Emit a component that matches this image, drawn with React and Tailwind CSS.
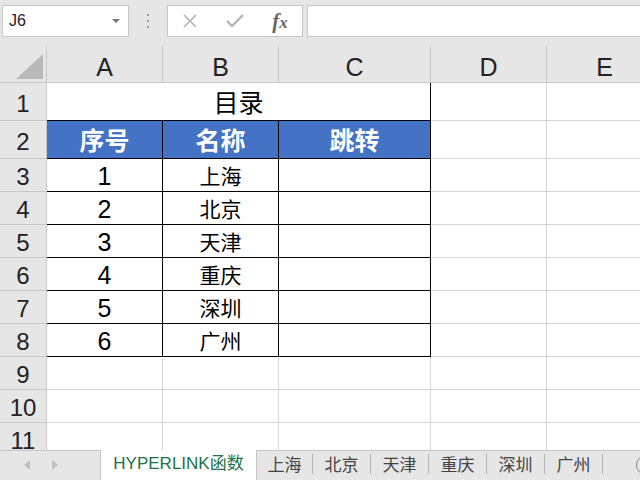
import React from "react";

const CJK = { fontFamily: '"Noto Sans CJK SC", "Noto Sans", sans-serif' };
const LAT = { fontFamily: '"Liberation Sans", "Noto Sans CJK SC", sans-serif' };

const cols = [
  { k: "A", w: "w-[116px]" },
  { k: "B", w: "w-[116px]" },
  { k: "C", w: "w-[152px]" },
  { k: "D", w: "w-[116px]" },
  { k: "E", w: "w-[116px]" },
];

const data = [
  ["1", "上海"],
  ["2", "北京"],
  ["3", "天津"],
  ["4", "重庆"],
  ["5", "深圳"],
  ["6", "广州"],
];

function RowHead({ n, h }) {
  return (
    <div
      className={`w-[47px] shrink-0 ${h} bg-[#e6e6e6] border-r border-b border-[#c8c8c8] flex items-center justify-center text-[24px] text-[#222] pt-[4px]`}
      style={LAT}
    >
      {n}
    </div>
  );
}

export default function App() {
  return (
    <div className="w-[640px] h-[480px] overflow-hidden bg-white flex flex-col relative select-none">
      {/* toolbar */}
      <div className="h-[46px] shrink-0 bg-[#e6e6e6] flex pl-[2px] pt-[5px]">
        <div className="w-[127px] h-[32px] bg-white border border-[#c6c6c6] flex items-center justify-between pl-[6px] pr-[8px]">
          <span className="text-[16px] text-[#222]" style={LAT}>J6</span>
          <svg width="8" height="5" viewBox="0 0 8 5"><path d="M0 0 L8 0 L4 4 Z" fill="#777" /></svg>
        </div>
        <div className="w-[38px] h-[32px] flex items-center justify-center">
          <svg width="4" height="14" viewBox="0 0 4 14">
            <rect x="1" y="0" width="2" height="2" fill="#9a9a9a" />
            <rect x="1" y="6" width="2" height="2" fill="#9a9a9a" />
            <rect x="1" y="12" width="2" height="2" fill="#9a9a9a" />
          </svg>
        </div>
        <div className="w-[136px] h-[32px] bg-white border border-[#c6c6c6] flex items-center">
          <div className="w-[40px] flex justify-center ml-[2px]">
            <svg width="16" height="16" viewBox="0 0 16 16"><path d="M2 2 L14 14 M14 2 L2 14" stroke="#b4b4b4" strokeWidth="1.6" /></svg>
          </div>
          <div className="w-[50px] flex justify-center">
            <svg width="20" height="16" viewBox="0 0 20 16"><path d="M2 8 L7 13 L18 2" stroke="#b4b4b4" strokeWidth="2.4" fill="none" /></svg>
          </div>
          <div className="w-[40px] flex justify-center">
            <span className="italic font-bold text-[21px] text-[#666] leading-none" style={{ fontFamily: '"Liberation Serif", serif' }}>
              f<span className="text-[17px]">x</span>
            </span>
          </div>
        </div>
        <div className="flex-1 ml-[4px] h-[32px] bg-white border border-[#c6c6c6] border-r-0" />
      </div>

      {/* sheet */}
      <div className="flex-1 flex flex-col overflow-hidden">
        {/* column headers */}
        <div className="flex h-[37px] shrink-0 bg-[#e6e6e6] border-b border-[#c8c8c8]">
          <div className="w-[47px] shrink-0 border-r border-[#c8c8c8] flex items-end justify-end pr-[3px] pb-[3px]">
            <svg width="27" height="25" viewBox="0 0 27 25"><path d="M27 0 L27 25 L0 25 Z" fill="#b9b9b9" /></svg>
          </div>
          {cols.map((c) => (
            <div
              key={c.k}
              className={`${c.w} shrink-0 border-r border-[#c8c8c8] flex items-center justify-center text-[25px] text-[#222] pt-[7px]`}
              style={LAT}
            >
              {c.k}
            </div>
          ))}
        </div>

        {/* row 1 */}
        <div className="flex">
          <RowHead n="1" h="h-[38px]" />
          <div className="w-[384px] shrink-0 h-[38px] border-r border-b border-black flex items-center justify-center text-[25px] text-black" style={CJK}>
            目录
          </div>
          <div className="w-[116px] shrink-0 h-[38px] border-r border-b border-[#d4d4d4]" />
          <div className="w-[116px] shrink-0 h-[38px] border-b border-[#d4d4d4]" />
        </div>

        {/* row 2 */}
        <div className="flex">
          <RowHead n="2" h="h-[38px]" />
          {["序号", "名称", "跳转"].map((t, i) => (
            <div
              key={t}
              className={`${i === 2 ? "w-[152px]" : "w-[116px]"} shrink-0 h-[38px] bg-[#4472c4] border-r border-b border-black flex items-center justify-center text-[25px] font-bold text-white`}
              style={CJK}
            >
              {t}
            </div>
          ))}
          <div className="w-[116px] shrink-0 h-[38px] border-r border-b border-[#d4d4d4]" />
          <div className="w-[116px] shrink-0 h-[38px] border-b border-[#d4d4d4]" />
        </div>

        {/* data rows */}
        {data.map((r, idx) => (
          <div className="flex" key={idx}>
            <RowHead n={String(idx + 3)} h="h-[33px]" />
            <div className="w-[116px] shrink-0 h-[33px] border-r border-b border-black flex items-center justify-center text-[25px] text-black pt-[3px]" style={LAT}>
              {r[0]}
            </div>
            <div className="w-[116px] shrink-0 h-[33px] border-r border-b border-black flex items-center justify-center text-[21px] text-black pt-[1px]" style={CJK}>
              {r[1]}
            </div>
            <div className="w-[152px] shrink-0 h-[33px] border-r border-b border-black" />
            <div className="w-[116px] shrink-0 h-[33px] border-r border-b border-[#d4d4d4]" />
            <div className="w-[116px] shrink-0 h-[33px] border-b border-[#d4d4d4]" />
          </div>
        ))}

        {/* empty rows */}
        {["9", "10", "11"].map((n) => (
          <div className="flex" key={n}>
            <RowHead n={n} h="h-[33px]" />
            {cols.map((c) => (
              <div key={c.k} className={`${c.w} shrink-0 h-[33px] border-r border-b border-[#d4d4d4]`} />
            ))}
          </div>
        ))}
      </div>

      {/* tab bar */}
      <div className="h-[30px] shrink-0 bg-[#e6e6e6] border-t border-[#c6c6c6] flex items-stretch relative">
        <div className="w-[100px] shrink-0 flex items-center pb-[2px]">
          <div className="w-[30px] flex justify-end">
            <svg width="6" height="10" viewBox="0 0 6 10"><path d="M6 0 L0 5 L6 10 Z" fill="#c0c0c0" /></svg>
          </div>
          <div className="w-[28px] flex justify-end">
            <svg width="6" height="10" viewBox="0 0 6 10"><path d="M0 0 L6 5 L0 10 Z" fill="#c0c0c0" /></svg>
          </div>
        </div>
        <div className="w-[157px] shrink-0 bg-white border-l border-r border-[#c6c6c6] -mt-px flex flex-col">
          <div className="flex-1 flex items-center justify-center text-[17px] text-[#217346] pt-[1px]" style={LAT}>
            HYPERLINK函数
          </div>
          <div className="h-[3px] bg-[#217346] mb-[4px]" />
        </div>
        {["上海", "北京", "天津", "重庆", "深圳", "广州"].map((t, i) => (
          <div key={t} className={`${i === 0 ? "w-[56px]" : "w-[58px]"} shrink-0 flex items-center`}>
            <div className="flex-1 text-center text-[17px] text-[#444] pb-[4px]" style={CJK}>{t}</div>
            <div className="w-px h-[20px] bg-[#b4b4b4] mb-[4px]" />
          </div>
        ))}
        <div className="absolute left-[636px] top-[4px] w-[20px] h-[20px] rounded-full border border-[#888]" />
      </div>
    </div>
  );
}
